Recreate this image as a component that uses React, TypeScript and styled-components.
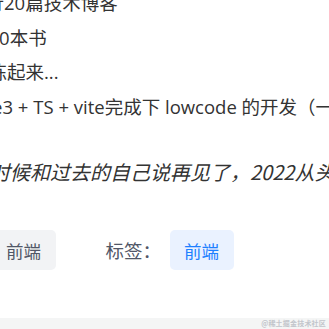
import React from "react";
import styled, { createGlobalStyle } from "styled-components";

const Global = createGlobalStyle`
  html, body {
    margin: 0;
    padding: 0;
    background: #ffffff;
    overflow: hidden;
  }
  body {
    width: 329px;
    height: 329px;
    font-family: "Open Sans", "Noto Sans CJK SC", sans-serif;
  }
`;

const Page = styled.div`
  position: relative;
  width: 329px;
  height: 329px;
  overflow: hidden;
  display: flex;
  flex-direction: column;
  color: #333333;
`;

const Article = styled.article`
  display: flex;
  flex-direction: column;
  margin-top: -14px;
  font-size: 18.5px;
  line-height: 34.5px;
`;

const GoalList = styled.ul`
  list-style: none;
  margin: 0;
  padding: 0;
`;

const Goal = styled.li<{ $shift: number }>`
  white-space: nowrap;
  margin-left: ${(p) => p.$shift}px;
`;

const Quote = styled.p<{ $shift: number }>`
  margin: 31px 0 0 ${(p) => p.$shift}px;
  white-space: nowrap;
  font-family: "Noto Sans CJK SC", sans-serif;
  font-size: 20px;
  font-style: italic;
`;

const TagRow = styled.div`
  display: flex;
  align-items: center;
  gap: 50px;
  margin: 40.5px 0 0 -72.5px;
  white-space: nowrap;
  font-family: "Noto Sans CJK SC", sans-serif;
`;

const TagGroup = styled.div`
  display: flex;
  align-items: center;
  gap: 8.5px;
`;

const Label = styled.span`
  font-size: 18.5px;
  color: #515767;
`;

const Tag = styled.span<{ $active?: boolean }>`
  display: inline-flex;
  align-items: center;
  height: 40px;
  padding: 0 14.5px;
  border-radius: 5px;
  font-size: 17.5px;
  background: ${(p) => (p.$active ? "#eaf2ff" : "#f2f3f5")};
  color: ${(p) => (p.$active ? "#1e80ff" : "#515767")};
`;

const Footer = styled.div`
  margin-top: 48px;
  height: 40px;
  background: #f4f5f5;
  flex-shrink: 0;
`;

const Watermark = styled.span`
  position: absolute;
  right: 3px;
  bottom: 1px;
  font-family: "Noto Sans CJK SC", sans-serif;
  font-size: 7px;
  line-height: 10px;
  font-weight: 700;
  color: #c2c5cb;
  letter-spacing: 0.2px;
`;

export default function App() {
  return (
    <>
      <Global />
      <Page>
        <Article>
          <GoalList>
            <Goal $shift={-14.5}>行20篇技术博客</Goal>
            <Goal $shift={-48.5}>读完10本书</Goal>
            <Goal $shift={-30}>锻炼起来...</Goal>
            <Goal $shift={-47}>用vue3 + TS + vite完成下 lowcode 的开发（一）</Goal>
          </GoalList>
          <Quote $shift={-30}>是时候和过去的自己说再见了，2022从头开始</Quote>
        </Article>
        <TagRow>
          <TagGroup>
            <Label>分类：</Label>
            <Tag>前端</Tag>
          </TagGroup>
          <TagGroup>
            <Label>标签：</Label>
            <Tag $active>前端</Tag>
          </TagGroup>
        </TagRow>
        <Footer />
        <Watermark>@稀土掘金技术社区</Watermark>
      </Page>
    </>
  );
}
